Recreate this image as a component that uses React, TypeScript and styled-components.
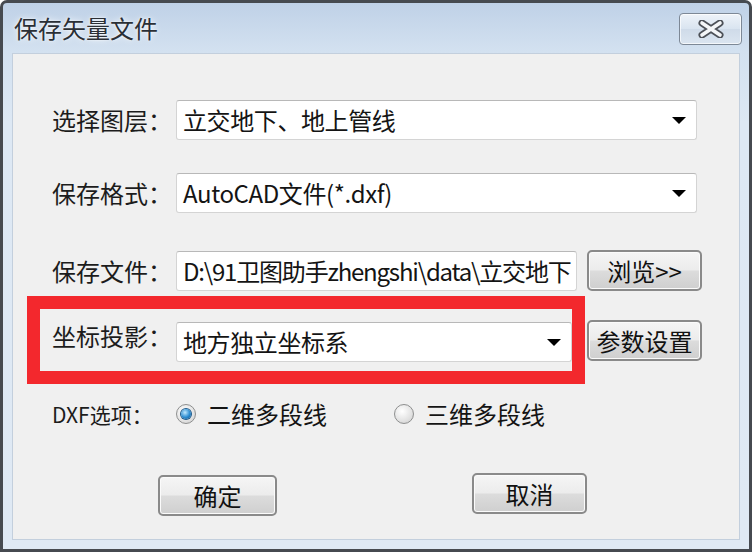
import styled, { createGlobalStyle } from "styled-components";

const GlobalStyle = createGlobalStyle`
  html, body {
    margin: 0;
    padding: 0;
    background: #ffffff;
  }
  body {
    font-family: "Noto Sans CJK SC", "Liberation Sans", sans-serif;
  }
`;

const cjk = `"Noto Sans CJK SC", "Liberation Sans", sans-serif`;

const Window = styled.div`
  box-sizing: border-box;
  width: 752px;
  height: 552px;
  border: 3px solid #464a50;
  border-radius: 7px 7px 0 0;
  background: linear-gradient(#bfd1e7 0px, #d3e1f0 48px, #dde8f4 120px, #dfe9f4);
  display: flex;
  flex-direction: column;
  padding: 0 9px 9px 9px;
`;

const TitleBar = styled.div`
  height: 50px;
  display: flex;
  align-items: center;
  justify-content: space-between;
  flex-shrink: 0;
`;

const Title = styled.div`
  font-family: ${cjk};
  font-size: 24px;
  line-height: 26px;
  color: #2a2f36;
  padding-left: 2px;
  text-shadow: 0 0 6px rgba(255, 255, 255, 0.9), 0 0 2px rgba(255, 255, 255, 0.9);
`;

const CloseButton = styled.div`
  box-sizing: border-box;
  width: 63px;
  height: 32px;
  margin-top: 1px;
  margin-right: -2px;
  border: 1px solid #7d8896;
  border-radius: 4px;
  background: linear-gradient(#eef3f9, #d9e4f0 50%, #cfdbe9 51%, #dbe5f0);
  box-shadow: inset 0 0 0 1px rgba(255, 255, 255, 0.7);
  display: flex;
  align-items: center;
  justify-content: center;
`;

const Content = styled.div`
  flex: 1;
  box-sizing: border-box;
  background: #f0f0f0;
  border: 1px solid #c3cfdd;
  display: flex;
  flex-direction: column;
  padding: 46px 0 0 39px;
`;

const Row = styled.div<{ $top: number }>`
  display: flex;
  align-items: center;
  margin-top: ${(p) => p.$top}px;
`;

const Label = styled.div<{ $small?: boolean }>`
  width: 124px;
  flex-shrink: 0;
  font-family: ${cjk};
  font-size: ${(p) => (p.$small ? 21 : 24)}px;
  line-height: 28px;
  color: #1c1c1c;
`;

const Field = styled.div<{ $width: number }>`
  box-sizing: border-box;
  width: ${(p) => p.$width}px;
  height: 40px;
  background: #ffffff;
  border: 1px solid #d4d4d4;
  border-top-color: #b8b8b8;
  border-radius: 3px;
  display: flex;
  align-items: center;
  padding: 0 10px 0 6px;
  font-family: ${cjk};
  font-size: 24px;
  line-height: 30px;
  color: #141414;
  white-space: nowrap;
  overflow: hidden;
`;

const FieldText = styled.span<{ $tight?: boolean }>`
  flex: 1;
  letter-spacing: ${(p) => (p.$tight ? -1.2 : -0.4)}px;
`;

const Arrow = styled.span`
  width: 0;
  height: 0;
  border-left: 7px solid transparent;
  border-right: 7px solid transparent;
  border-top: 7px solid #000000;
  flex-shrink: 0;
`;

const Button = styled.div<{ $width: number }>`
  box-sizing: border-box;
  width: ${(p) => p.$width}px;
  height: 41px;
  border: 2px solid #8a8a8a;
  border-radius: 5px;
  background: linear-gradient(#f5f5f5, #ececec 48%, #dcdcdc 52%, #cfcfcf);
  box-shadow: inset 0 0 0 1px #fbfbfb;
  display: flex;
  align-items: center;
  justify-content: center;
  font-family: ${cjk};
  font-size: 24px;
  line-height: 28px;
  color: #111111;
  flex-shrink: 0;
`;

const BrowseButton = styled(Button)`
  margin-left: 10px;
`;

const Highlight = styled.div`
  box-sizing: border-box;
  width: 558px;
  height: 88px;
  margin-left: -25px;
  border: 13px solid #f3282d;
  padding: 13px 0 0 12px;
  display: flex;
  align-items: flex-start;
`;

const HighlightRow = styled.div`
  display: flex;
  align-items: flex-start;
  margin-top: 5px;
`;

const SideButton = styled(Button)`
  margin-left: 2px;
  margin-top: 24px;
`;

const RadioGroup = styled.label`
  display: flex;
  align-items: center;
  gap: 11px;
  font-family: ${cjk};
  font-size: 24px;
  line-height: 28px;
  color: #141414;
`;

const RadioDot = styled.span<{ $checked?: boolean }>`
  box-sizing: border-box;
  width: 20px;
  height: 20px;
  border-radius: 50%;
  border: 1px solid #8e8f8f;
  background: radial-gradient(circle at 40% 35%, #ffffff, #e2e2e2 60%, #c9c9c9);
  display: flex;
  align-items: center;
  justify-content: center;
  &::after {
    content: "";
    display: ${(p) => (p.$checked ? "block" : "none")};
    width: 10px;
    height: 10px;
    border-radius: 50%;
    background: radial-gradient(circle at 40% 35%, #bfe8ff, #2a8bd0 55%, #0d4f8a);
    box-shadow: 0 0 0 1px #1c5a8c;
  }
`;

const Options = styled.div`
  display: flex;
  align-items: center;
  gap: 67px;
`;

const Footer = styled.div`
  display: flex;
  align-items: flex-start;
  margin-top: 45px;
  padding-left: 106px;
  gap: 195px;
`;

const OkButton = styled(Button)`
  margin-top: 2px;
`;

export default function App() {
  return (
    <>
      <GlobalStyle />
      <Window>
        <TitleBar>
          <Title>保存矢量文件</Title>
          <CloseButton>
            <svg width="28" height="18" viewBox="0 0 28 18">
              <path d="M5 3 L23 15 M23 3 L5 15" stroke="#4d5158" strokeWidth="7" strokeLinecap="round" />
              <path d="M5 3 L23 15 M23 3 L5 15" stroke="#f4f6f8" strokeWidth="3.6" strokeLinecap="round" />
            </svg>
          </CloseButton>
        </TitleBar>
        <Content>
          <Row $top={0}>
            <Label>选择图层：</Label>
            <Field $width={521}>
              <FieldText>立交地下、地上管线</FieldText>
              <Arrow />
            </Field>
          </Row>
          <Row $top={33}>
            <Label>保存格式：</Label>
            <Field $width={521}>
              <FieldText>AutoCAD文件(*.dxf)</FieldText>
              <Arrow />
            </Field>
          </Row>
          <Row $top={37}>
            <Label>保存文件：</Label>
            <Field $width={401}>
              <FieldText $tight>D:\91卫图助手zhengshi\data\立交地下</FieldText>
            </Field>
            <BrowseButton $width={115}>浏览&gt;&gt;</BrowseButton>
          </Row>
          <HighlightRow>
            <Highlight>
              <Label>坐标投影：</Label>
              <Field $width={396}>
                <FieldText>地方独立坐标系</FieldText>
                <Arrow />
              </Field>
            </Highlight>
            <SideButton $width={115}>参数设置</SideButton>
          </HighlightRow>
          <Row $top={16}>
            <Label $small>DXF选项：</Label>
            <Options>
              <RadioGroup>
                <RadioDot $checked />
                二维多段线
              </RadioGroup>
              <RadioGroup>
                <RadioDot />
                三维多段线
              </RadioGroup>
            </Options>
          </Row>
          <Footer>
            <OkButton $width={119}>确定</OkButton>
            <Button $width={115}>取消</Button>
          </Footer>
        </Content>
      </Window>
    </>
  );
}
